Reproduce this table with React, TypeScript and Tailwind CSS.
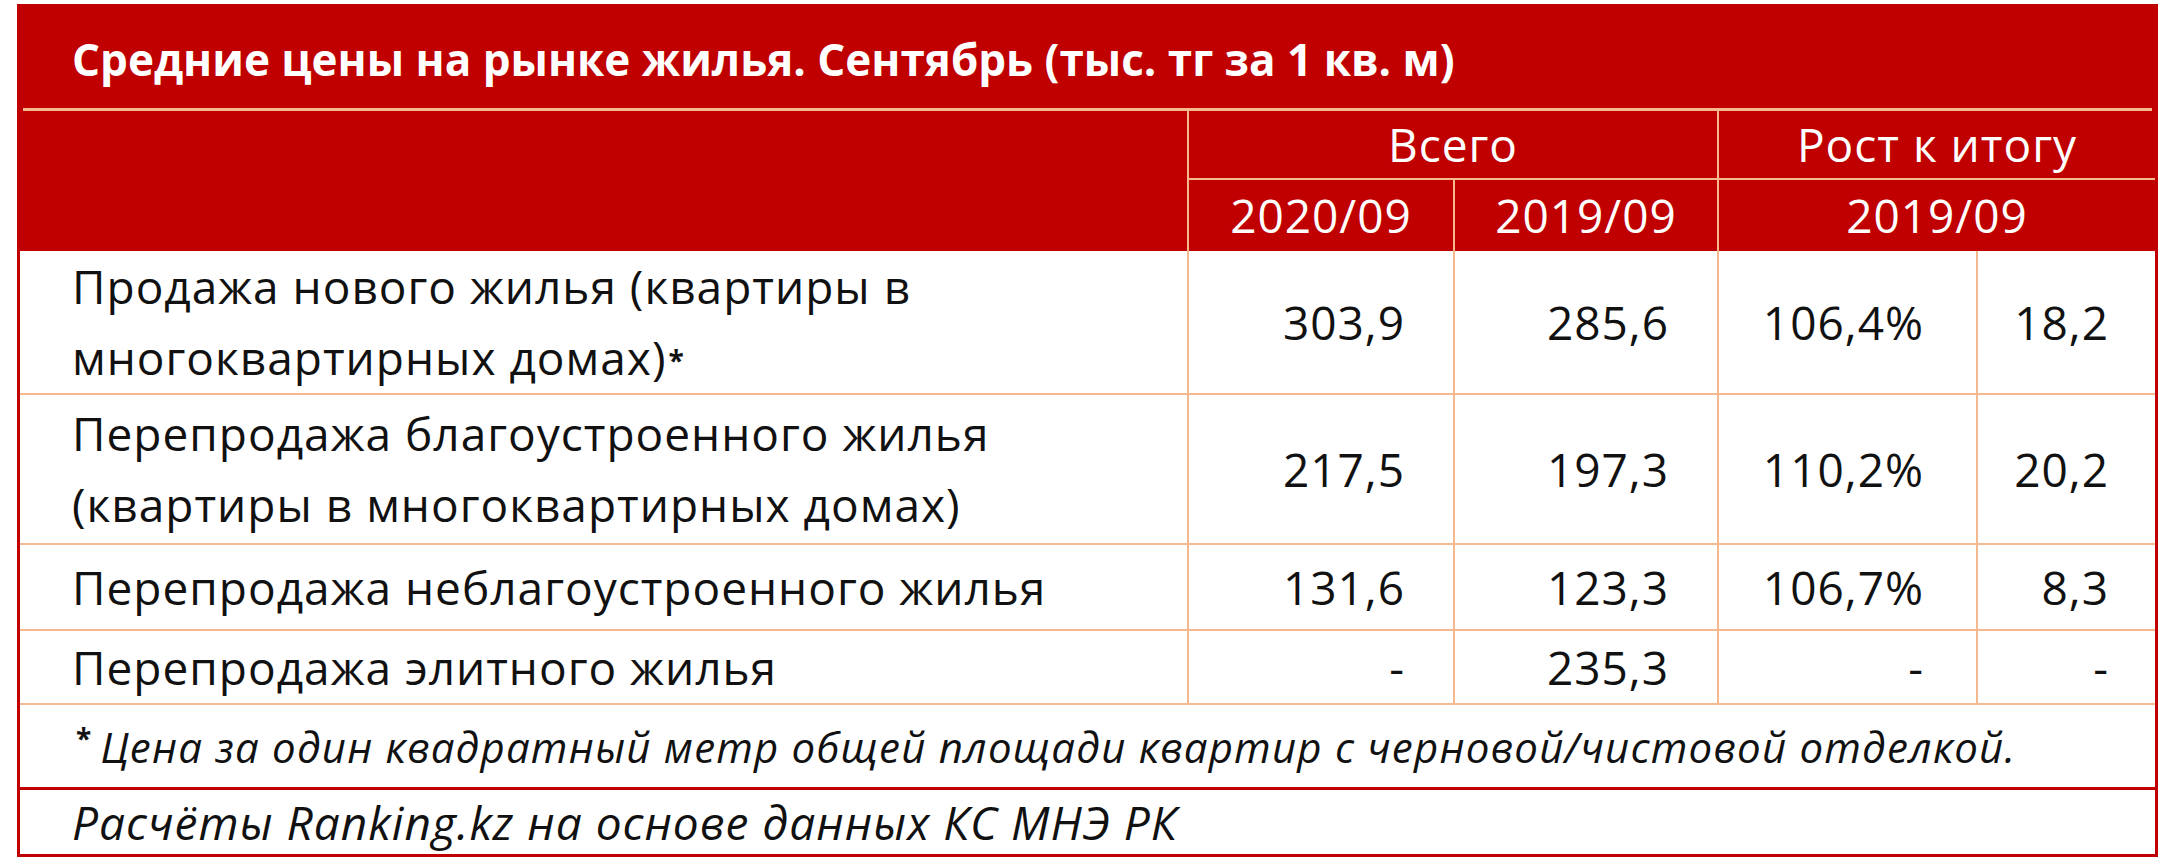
import React from "react";

type Row = {
  label: string[];
  cells: string[];
  h: string;
};

const rows: Row[] = [
  {
    label: ["Продажа нового жилья (квартиры в", "многоквартирных домах)*"],
    cells: ["303,9", "285,6", "106,4%", "18,2"],
    h: "h-[144px]",
  },
  {
    label: ["Перепродажа благоустроенного жилья", "(квартиры в многоквартирных домах)"],
    cells: ["217,5", "197,3", "110,2%", "20,2"],
    h: "h-[150px]",
  },
  {
    label: ["Перепродажа неблагоустроенного жилья"],
    cells: ["131,6", "123,3", "106,7%", "8,3"],
    h: "h-[86px]",
  },
  {
    label: ["Перепродажа элитного жилья"],
    cells: ["-", "235,3", "-", "-"],
    h: "h-[74px]",
  },
];

// right padding of each number column
const pads = ["pr-[48px]", "pr-[48px]", "pr-[52px]", "pr-[46px]"];

const Label = ({ lines }: { lines: string[] }) => (
  <div className="flex flex-col justify-center pl-[52px] leading-[71px]">
    {lines.map((l, i) => {
      const star = l.endsWith("*");
      return (
        <span key={i} className="whitespace-nowrap">
          {star ? l.slice(0, -1) : l}
          {star && <sup className="text-[28px] font-bold relative -top-[4px] ml-[2px]">*</sup>}
        </span>
      );
    })}
  </div>
);

export default function App() {
  return (
    <div className="min-h-screen bg-white pt-[4px] pl-[17px]" style={{ fontFamily: '"Open Sans", "Noto Sans", sans-serif' }}>
      <div className="w-[2141px] border-[3px] border-[#c00000] bg-white">
        {/* title */}
        <div className="h-[101px] bg-[#c00000] flex items-center pl-[52px] pt-[2px]">
          <span className="text-white font-bold text-[44px] whitespace-nowrap">
            Средние цены на рынке жилья. Сентябрь (тыс. тг за 1 кв. м)
          </span>
        </div>
        <div className="bg-[#c00000] px-[3px]">
          <div className="h-[3px] bg-[#f6b98e]" />
        </div>

        {/* header */}
        <div className="grid grid-cols-[1167px_266px_264px_259px_179px] grid-rows-[69px_71px] bg-[#c00000] text-white text-[46px] tracking-[1px]">
          <div className="row-span-2" />
          <div className="col-span-2 border-l-2 border-b-2 border-[#f6b98e] flex items-center justify-center">Всего</div>
          <div className="col-span-2 border-l-2 border-b-2 border-[#f6b98e] flex items-center justify-center">Рост к итогу</div>
          <div className="border-l-2 border-[#f6b98e] flex items-center justify-center">2020/09</div>
          <div className="border-l-2 border-[#f6b98e] flex items-center justify-center">2019/09</div>
          <div className="col-span-2 border-l-2 border-[#f6b98e] flex items-center justify-center">2019/09</div>
        </div>

        {/* body */}
        <div className="text-[#111] text-[46px] tracking-[1px]">
          {rows.map((r, i) => (
            <div key={i} className={`grid grid-cols-[1167px_266px_264px_259px_179px] border-b-2 border-[#f6b98e] ${r.h}`}>
              <Label lines={r.label} />
              {r.cells.map((c, j) => (
                <div key={j} className={`border-l-2 border-[#f6b98e] flex items-center justify-end ${pads[j]}`}>
                  {c}
                </div>
              ))}
            </div>
          ))}
        </div>

        {/* footnote */}
        <div className="h-[85px] flex items-center pl-[56px] border-b-[3px] border-[#c00000] italic text-[42px] tracking-[1.2px] text-[#111] whitespace-nowrap">
          <span className="not-italic font-bold text-[28px] relative -top-[8px] mr-[8px]">*</span>
          Цена за один квадратный метр общей площади квартир с черновой/чистовой отделкой.
        </div>

        {/* source */}
        <div className="h-[64px] flex items-center pl-[52px] italic text-[46px] tracking-[1px] text-[#111] whitespace-nowrap">
          Расчёты Ranking.kz на основе данных КС МНЭ РК
        </div>
      </div>
    </div>
  );
}
